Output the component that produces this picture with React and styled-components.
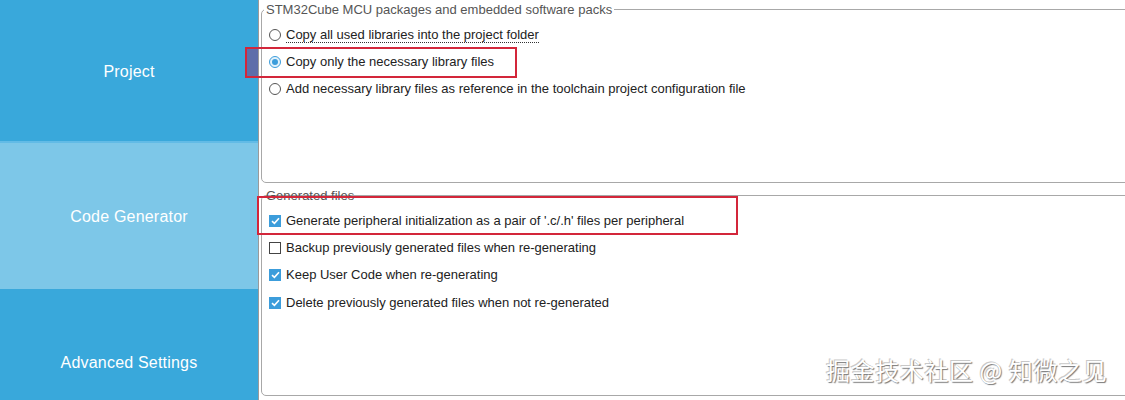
import React from "react";
import styled, { createGlobalStyle } from "styled-components";

const GlobalStyle = createGlobalStyle`
    html, body {
        margin: 0;
        padding: 0;
        background: #ffffff;
        overflow: hidden;
    }
`;

const navItems = [
    { label: "Project", height: 141 },
    { label: "Code Generator", height: 146, active: true },
    { label: "Advanced Settings", height: 146 },
];

const packOptions = [
    { label: "Copy all used libraries into the project folder", focused: true },
    { label: "Copy only the necessary library files", checked: true },
    { label: "Add necessary library files as reference in the toolchain project configuration file" },
];

const generatedOptions = [
    { label: "Generate peripheral initialization as a pair of '.c/.h' files per peripheral", checked: true },
    { label: "Backup previously generated files when re-generating" },
    { label: "Keep User Code when re-generating", checked: true },
    { label: "Delete previously generated files when not re-generated", checked: true },
];

const App = () => {
    return (
        <>
            <GlobalStyle />
            <StyledPage>
                <StyledSidebar>
                    {navItems.map((item) => (
                        <NavItem key={item.label} active={item.active} h={item.height}>
                            {item.label}
                        </NavItem>
                    ))}
                </StyledSidebar>
                <StyledContent>
                    <Group h={174} mt={9}>
                        <GroupTitle masked>STM32Cube MCU packages and embedded software packs</GroupTitle>
                        {packOptions.map((opt) => (
                            <Row key={opt.label}>
                                <Radio checked={opt.checked} />
                                <Label focused={opt.focused}>{opt.label}</Label>
                            </Row>
                        ))}
                    </Group>
                    <Group h={201} mt={12}>
                        <GroupTitle>Generated files</GroupTitle>
                        {generatedOptions.map((opt) => (
                            <Row key={opt.label} tall>
                                <Checkbox checked={opt.checked}>
                                    {opt.checked && (
                                        <svg width="9" height="8" viewBox="0 0 9 8">
                                            <path d="M1 4.2 L3.4 6.4 L8 1.2" fill="none" stroke="#ffffff" strokeWidth="1.6" />
                                        </svg>
                                    )}
                                </Checkbox>
                                <Label>{opt.label}</Label>
                            </Row>
                        ))}
                    </Group>
                </StyledContent>
                <Highlight style={{ left: 245, top: 47, width: 272, height: 31 }} over={13} />
                <Highlight style={{ left: 257, top: 196, width: 481, height: 39 }} />
                <Watermark>掘金技术社区 @ 知微之见</Watermark>
            </StyledPage>
        </>
    );
};

export default App;

const StyledPage = styled.div`
    position: relative;
    display: flex;
    width: 1125px;
    height: 400px;
    overflow: hidden;
    font-family: "Liberation Sans", Arial, sans-serif;
`;

const StyledSidebar = styled.nav`
    display: flex;
    flex-direction: column;
    width: 258px;
    flex-shrink: 0;
    border-right: 1px solid #9a9a9a;
    background: #39a8db;
`;

const NavItem = styled.div`
    box-sizing: border-box;
    display: flex;
    align-items: center;
    justify-content: center;
    height: ${(p) => p.h + (p.active ? 2 : 0)}px;
    flex-shrink: 0;
    padding-top: 2px;
    background: ${(p) => (p.active ? "#7dc7e8" : "#39a8db")};
    border-top: ${(p) => (p.active ? "2px solid #62bbe6" : "none")};
    color: #ffffff;
    font-size: 16px;
    letter-spacing: 0.2px;
`;

const StyledContent = styled.main`
    display: flex;
    flex-direction: column;
    flex: 1;
    padding-left: 2px;
    margin-right: -12px;
`;

const Group = styled.section`
    position: relative;
    box-sizing: border-box;
    height: ${(p) => p.h}px;
    margin-top: ${(p) => p.mt}px;
    padding-top: 11px;
    border: 1px solid #a8a8a8;
    border-radius: 5px;
`;

const GroupTitle = styled.span`
    position: absolute;
    top: -8px;
    left: 2px;
    padding: 0 2px;
    background: ${(p) => (p.masked ? "#ffffff" : "transparent")};
    color: #555555;
    font-size: 13px;
    line-height: 15px;
`;

const Row = styled.div`
    display: flex;
    align-items: center;
    gap: 5px;
    height: ${(p) => (p.tall ? 27.4 : 27)}px;
    padding-left: 7px;
`;

const Radio = styled.span`
    box-sizing: border-box;
    display: flex;
    align-items: center;
    justify-content: center;
    width: 12px;
    height: 12px;
    border-radius: 50%;
    border: 1px solid ${(p) => (p.checked ? "#3c9ddb" : "#555555")};
    background: ${(p) => (p.checked ? "#e4f2fb" : "#ffffff")};

    &::after {
        content: "";
        display: ${(p) => (p.checked ? "block" : "none")};
        width: 6px;
        height: 6px;
        border-radius: 50%;
        background: #3c9ddb;
    }
`;

const Checkbox = styled.span`
    box-sizing: border-box;
    display: flex;
    align-items: center;
    justify-content: center;
    width: 12px;
    height: 12px;
    border: 1px solid ${(p) => (p.checked ? "#3c9ddb" : "#444444")};
    background: ${(p) => (p.checked ? "#3c9ddb" : "#ffffff")};
`;

const Label = styled.span`
    color: #222222;
    font-size: 13px;
    line-height: 15px;
    border-bottom: 1px dotted ${(p) => (p.focused ? "#333333" : "transparent")};
`;

const Highlight = styled.div`
    position: absolute;
    box-sizing: border-box;
    border: 2px solid #d3263a;

    &::before {
        content: "";
        display: ${(p) => (p.over ? "block" : "none")};
        position: absolute;
        left: 0;
        top: 0;
        bottom: 0;
        width: ${(p) => p.over - 2}px;
        background: rgba(140, 40, 110, 0.45);
    }
`;

const Watermark = styled.div`
    position: absolute;
    left: 826px;
    top: 354px;
    color: #ffffff;
    font-family: "Noto Sans CJK SC", sans-serif;
    font-size: 24px;
    line-height: 32px;
    letter-spacing: 0.6px;
    text-shadow: 1px 1px 1px #777777, -1px -1px 0 #c8c8c8;
`;
